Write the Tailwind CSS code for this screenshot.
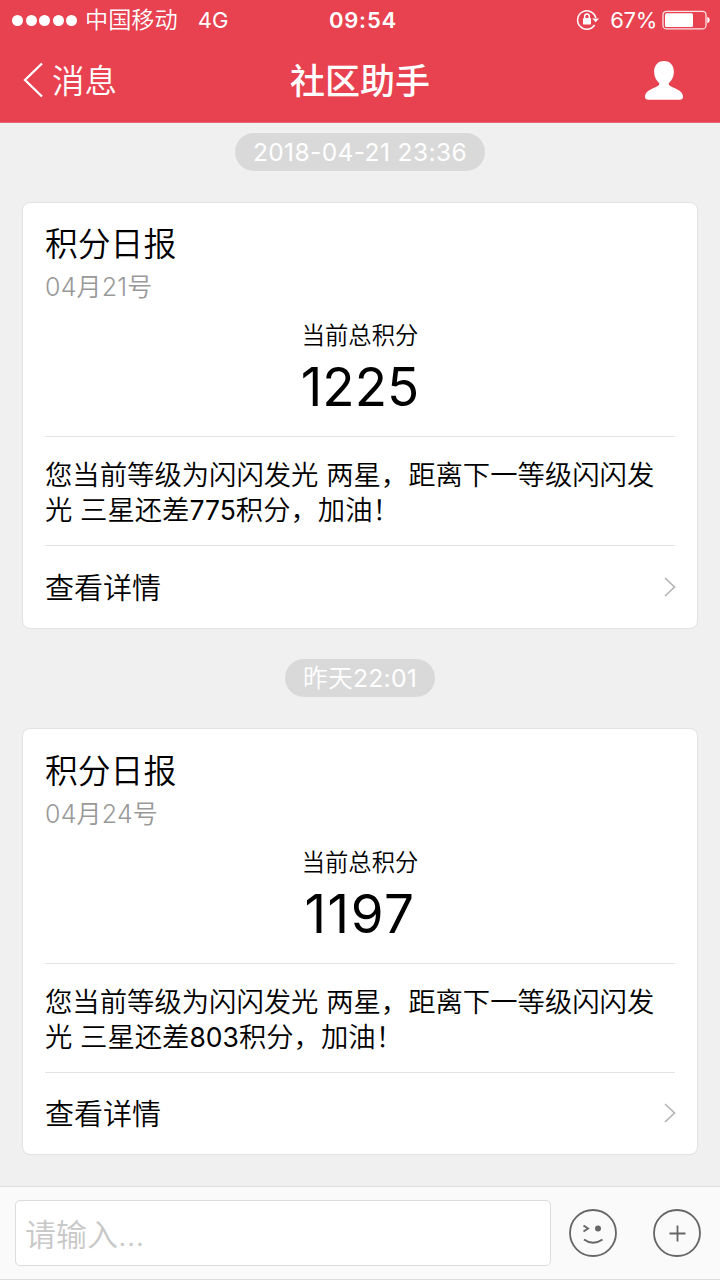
<!DOCTYPE html>
<html lang="zh-CN">
<head>
<meta charset="utf-8">
<title>社区助手</title>
<script src="https://cdn.jsdelivr.net/npm/@tailwindcss/browser@4"></script>
</head>
<body class="w-[720px] h-[1280px] overflow-hidden bg-[#f0f0f0] font-['Inter','Noto_Sans_CJK_SC',sans-serif] font-[350] text-black flex flex-col whitespace-nowrap">
<header class="h-[123px] shrink-0 bg-[#e84150] text-white border-b border-[#e66a76]">
  <div class="h-10 grid grid-cols-3 items-center text-[22px] leading-10 pl-3 pr-[11px]">
    <div class="flex items-center">
      <div class="flex gap-[2.5px] mr-[8px]">
        <i class="size-[11px] rounded-full bg-white"></i><i class="size-[11px] rounded-full bg-white"></i><i class="size-[11px] rounded-full bg-white"></i><i class="size-[11px] rounded-full bg-white"></i><i class="size-[11px] rounded-full bg-white"></i>
      </div>
      <span class="text-[23.200px]">中国移动</span>
      <span class="ml-[20px] font-normal">4G</span>
    </div>
    <div class="text-center font-semibold tracking-[0.8px] pl-[5px]">09:54</div>
    <div class="flex items-center justify-end">
      <svg class="w-6 h-6 mr-[10px]" viewBox="0 0 24 24" fill="none" stroke="white" stroke-width="1.5"><path d="M18.6 17A9.2 9.2 0 1 1 19.8 10"/><path d="M16.3 10.500h6.800L19.700 14.300z" fill="white" stroke="none"/><rect x="7" y="10" width="8" height="6.500" rx=".7" fill="white" stroke="none"/><path d="M8.700 10.500V8.300a2.300 2.300 0 0 1 4.600 0v2.200"/></svg>
      <span class="text-[22px] font-normal tracking-[-0.3px]">67%</span>
      <svg class="w-[48px] h-5 ml-[5px] mr-[-1px]" viewBox="0 0 48 20"><rect x="1" y="1.300" width="43" height="17.600" rx="3.500" fill="none" stroke="white" stroke-opacity=".85" stroke-width="1.300"/><rect x="3" y="3.200" width="28" height="13.800" rx="1.500" fill="white"/><path d="M45.300 6.800q2.400.7 2.400 3.300t-2.400 3.300z" fill="white"/></svg>
    </div>
  </div>
  <div class="h-20 grid grid-cols-3 items-center pl-[23px] pr-[36px]">
    <div class="flex items-center">
      <svg class="w-5 h-9 mr-[9px]" viewBox="0 0 20 36" fill="none" stroke="white" stroke-width="2.3"><path d="M19 1.500 2 18 19 34.500"/></svg>
      <span class="text-[32.500px] leading-10 pt-[3px]">消息</span>
    </div>
    <h1 class="text-[35px] font-medium leading-10 text-center pl-[13px] pt-[2px]">社区助手</h1>
    <svg class="w-10 h-10 justify-self-end" viewBox="0 0 40 40" fill="white"><path d="M20 1C13.700 1 10 5.800 10.100 12c.1 5.200 2.200 8.800 5.100 11 .2 1.800-.8 2.800-2.400 3.600C9.500 28.300 1 31 1 36.500q0 3.300 3.500 3.300h31q3.500 0 3.500-3.300c0-5.500-8.500-8.200-11.800-9.900-1.600-.8-2.600-1.800-2.400-3.600 2.900-2.200 5-5.800 5.100-11C30 5.800 26.300 1 20 1z"/></svg>
  </div>
</header>

<main class="flex-1 min-h-0 px-[22px]">
  <div class="pt-[10px] flex justify-center"><time class="h-[38px] w-[250px] rounded-full bg-[#d9d9d9] text-white text-center font-normal text-[24.500px] tracking-[0.4px] leading-[38px]">2018-04-21 23:36</time></div>
  <section class="mt-[31px] h-[427px] bg-white border border-[#e2e2e2] rounded-lg px-[22px]">
    <h2 class="pt-[19px] text-[32.800px] leading-[44px]">积分日报</h2>
    <p class="mt-[6px] text-[25px] leading-[30px] text-[#999] tracking-[0.2px]">04月21号</p>
    <p class="mt-[19px] text-[23.300px] leading-[30px] text-center">当前总积分</p>
    <p class="mt-[6px] h-[79px] text-[53px] font-normal leading-[61px] text-center">1225</p>
    <p class="border-y border-[#e2e2e2] h-[110px] pt-[21px] text-[27.350px] leading-[35px]">您当前等级为闪闪发光 两星，距离下一等级闪闪发<br>光 三星还差<span class="text-[26.500px] font-normal">775</span>积分，加油！</p>
    <div class="h-[82px] flex items-center justify-between text-[29px]"><span class="pt-[3px]">查看详情</span>
      <svg class="w-3 h-5 mr-[-1px]" viewBox="0 0 12 20" fill="none" stroke="#b5b5b5" stroke-width="1.700"><path d="M1 1l9.500 9L1 19"/></svg></div>
  </section>
  <div class="pt-[30px] flex justify-center"><time class="h-[38px] w-[150px] rounded-full bg-[#d9d9d9] text-white text-center text-[24.800px] tracking-[0.2px] leading-[39px]">昨天<span class="font-normal">22:01</span></time></div>
  <section class="mt-[31px] h-[427px] bg-white border border-[#e2e2e2] rounded-lg px-[22px]">
    <h2 class="pt-[20px] text-[32.800px] leading-[44px]">积分日报</h2>
    <p class="mt-[6px] text-[25px] leading-[30px] text-[#999] tracking-[0.2px]">04月24号</p>
    <p class="mt-[19px] text-[23.300px] leading-[30px] text-center">当前总积分</p>
    <p class="mt-[6px] h-[79px] text-[53px] font-normal leading-[61px] text-center tracking-[1.500px]">1197</p>
    <p class="border-y border-[#e2e2e2] h-[110px] pt-[21px] text-[27.350px] leading-[35px]">您当前等级为闪闪发光 两星，距离下一等级闪闪发<br>光 三星还差<span class="text-[26.500px] font-normal">803</span>积分，加油！</p>
    <div class="h-[80px] flex items-center justify-between text-[29px]"><span class="pt-[3px]">查看详情</span>
      <svg class="w-3 h-5 mr-[-1px]" viewBox="0 0 12 20" fill="none" stroke="#b5b5b5" stroke-width="1.700"><path d="M1 1l9.500 9L1 19"/></svg></div>
  </section>
</main>

<footer class="h-[94px] shrink-0 bg-[#fafafa] border-y border-[#dedede] pt-[13px] pl-[15px] flex items-start">
  <div class="w-[536px] h-[66px] bg-white border border-[#dcdcdc] rounded-[5px] pl-[9px] text-[31px] leading-[68px] text-[#c8c8c8]">请输入...</div>
  <svg class="w-12 h-12 ml-[18px] mt-[8.500px]" viewBox="0 0 48 48" fill="none" stroke="#666" stroke-width="1.800"><circle cx="24" cy="24" r="23"/><path d="M14.500 16.500l4.500 3-4.500 3M15 30.500q9 6.500 18.500 0" stroke-width="2"/><circle cx="29" cy="19.500" r="3" fill="#666" stroke="none"/></svg>
  <svg class="w-12 h-12 ml-[36px] mt-[8.500px]" viewBox="0 0 48 48" fill="none" stroke="#666" stroke-width="1.800"><circle cx="24" cy="24" r="23"/><path d="M24.500 16.500v16M16.500 24.500h16"/></svg>
</footer>
</body>
</html>
